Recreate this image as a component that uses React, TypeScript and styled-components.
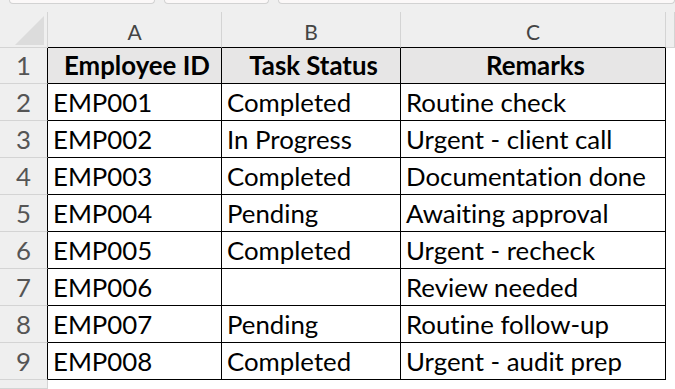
import React from "react";
import styled, { createGlobalStyle } from "styled-components";

const GlobalStyle = createGlobalStyle`
  html, body {
    margin: 0;
    padding: 0;
    background: #ffffff;
    overflow: hidden;
  }
  body {
    font-family: Lato, "Liberation Sans", sans-serif;
    font-variant-ligatures: none;
  }
`;

const rows = [
  { id: "EMP001", status: "Completed", remarks: "Routine check" },
  { id: "EMP002", status: "In Progress", remarks: "Urgent - client call" },
  { id: "EMP003", status: "Completed", remarks: "Documentation done" },
  { id: "EMP004", status: "Pending", remarks: "Awaiting approval" },
  { id: "EMP005", status: "Completed", remarks: "Urgent - recheck" },
  { id: "EMP006", status: "", remarks: "Review needed" },
  { id: "EMP007", status: "Pending", remarks: "Routine follow-up" },
  { id: "EMP008", status: "Completed", remarks: "Urgent - audit prep" },
];

const Sheet = styled.div`
  width: 675px;
  height: 389px;
  overflow: hidden;
  background: #ffffff;
`;

const TopStrip = styled.div`
  display: flex;
  gap: 9px;
  height: 12px;
  padding-left: 9px;
  background: #efefef;
  box-sizing: border-box;
`;

const Tab = styled.div<{ $w?: number }>`
  height: 3px;
  width: ${(p) => (p.$w ? `${p.$w}px` : "auto")};
  flex: ${(p) => (p.$w ? "none" : "1")};
  background: #fbf8f8;
  border: 1px solid #d2d2d2;
  border-top: none;
  border-radius: 0 0 5px 5px;
`;

const Grid = styled.div`
  display: grid;
  grid-template-columns: 48px 174px 179px 265px 1fr;
  grid-template-rows: 36px 36px repeat(8, 37px) 1fr;
  height: 377px;
`;

const Corner = styled.div`
  position: relative;
  background: #efefef;
  border-right: 1px solid #d4d4d4;
  border-bottom: 1px solid #d4d4d4;
  box-sizing: border-box;
`;

const CornerMark = styled.div`
  position: absolute;
  right: 3px;
  bottom: 2px;
  width: 29px;
  height: 29px;
  background: #dcdcdc;
  clip-path: polygon(100% 0, 100% 100%, 0 100%);
`;

const ColHead = styled.div<{ $edge?: boolean }>`
  display: flex;
  align-items: flex-end;
  justify-content: center;
  padding-bottom: 5px;
  box-sizing: border-box;
  background: #efefef;
  border-right: 1px solid #d4d4d4;
  border-bottom: 1px solid ${(p) => (p.$edge ? "#d4d4d4" : "#000000")};
  color: #444444;
  font-size: 21px;
  line-height: 1;
`;

const RowHead = styled.div<{ $inTable?: boolean }>`
  display: flex;
  align-items: flex-end;
  justify-content: center;
  padding-bottom: 4px;
  box-sizing: border-box;
  background: #efefef;
  border-right: 1px solid ${(p) => (p.$inTable ? "#000000" : "#d4d4d4")};
  border-bottom: 1px solid #d4d4d4;
  color: #555555;
  font-size: 25.8px;
  line-height: 1;
  overflow: hidden;
`;

const Cell = styled.div<{ $head?: boolean }>`
  display: flex;
  align-items: flex-end;
  justify-content: ${(p) => (p.$head ? "center" : "flex-start")};
  padding: 0 0 4px 5px;
  box-sizing: border-box;
  background: ${(p) => (p.$head ? "#e7e6e6" : "#ffffff")};
  border-right: 1px solid #000000;
  border-bottom: 1px solid #000000;
  color: #000000;
  font-size: 25.8px;
  font-weight: ${(p) => (p.$head ? 700 : 400)};
  line-height: 1;
  white-space: nowrap;
  overflow: hidden;
`;

const Blank = styled.div`
  background: #ffffff;
`;

export default function App() {
  return (
    <Sheet>
      <GlobalStyle />
      <TopStrip>
        <Tab $w={144} />
        <Tab $w={103} />
        <Tab />
      </TopStrip>
      <Grid>
        <Corner>
          <CornerMark />
        </Corner>
        <ColHead>A</ColHead>
        <ColHead>B</ColHead>
        <ColHead>C</ColHead>
        <ColHead $edge />

        <RowHead $inTable>1</RowHead>
        <Cell $head>Employee ID</Cell>
        <Cell $head>Task Status</Cell>
        <Cell $head>Remarks</Cell>
        <Blank />

        {rows.map((r, i) => (
          <React.Fragment key={r.id}>
            <RowHead $inTable>{i + 2}</RowHead>
            <Cell>{r.id}</Cell>
            <Cell>{r.status}</Cell>
            <Cell>{r.remarks}</Cell>
            <Blank />
          </React.Fragment>
        ))}

        <RowHead />
        <Blank />
        <Blank />
        <Blank />
        <Blank />
      </Grid>
    </Sheet>
  );
}
